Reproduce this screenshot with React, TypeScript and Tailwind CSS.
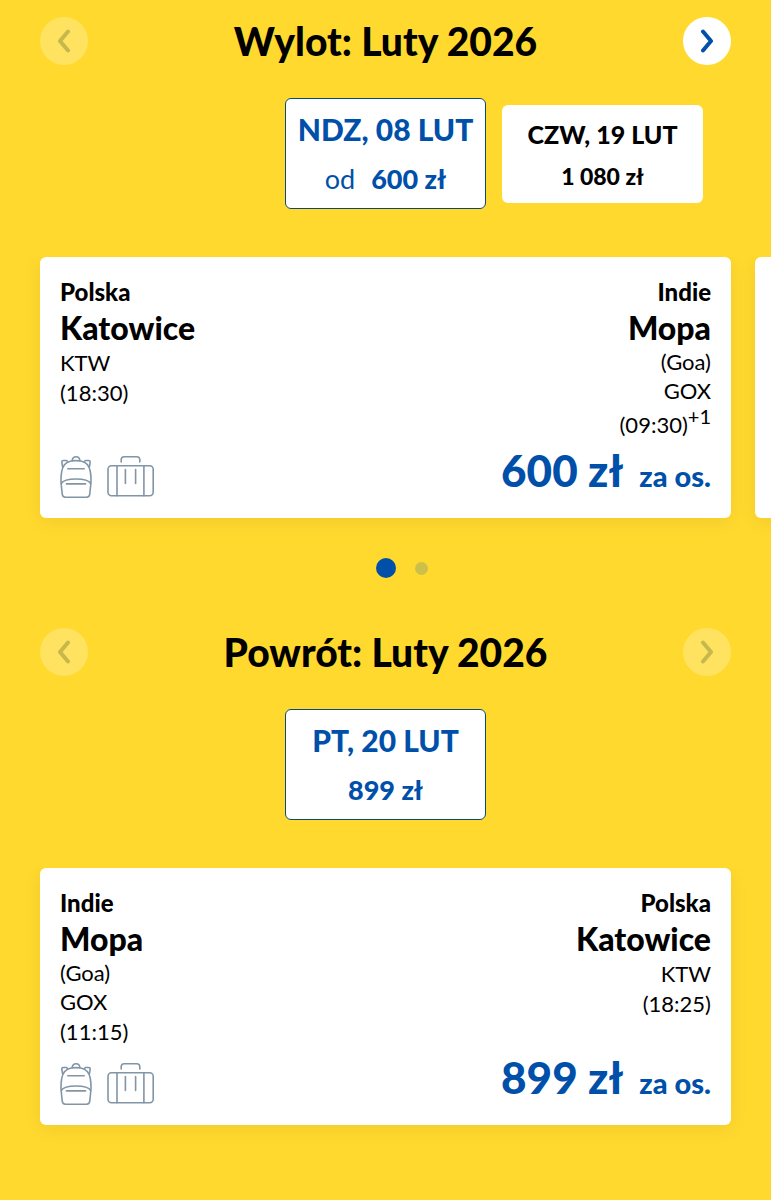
import React from 'react'
import clsx from 'clsx'

type Airport = {
  country: string
  city: string
  region?: string
  code: string
  time: string
  dayShift?: string
}

type DateOption = {
  label: string
  price: string
  prefix?: string
  selected?: boolean
}

type Flight = {
  from: Airport
  to: Airport
  price: string
}

const outboundDates: DateOption[] = [
  { label: 'NDZ, 08 LUT', price: '600 zł', prefix: 'od', selected: true },
  { label: 'CZW, 19 LUT', price: '1 080 zł' },
]

const returnDates: DateOption[] = [{ label: 'PT, 20 LUT', price: '899 zł', selected: true }]

const outboundFlight: Flight = {
  from: { country: 'Polska', city: 'Katowice', code: 'KTW', time: '(18:30)' },
  to: { country: 'Indie', city: 'Mopa', region: '(Goa)', code: 'GOX', time: '(09:30)', dayShift: '+1' },
  price: '600 zł',
}

const returnFlight: Flight = {
  from: { country: 'Indie', city: 'Mopa', region: '(Goa)', code: 'GOX', time: '(11:15)' },
  to: { country: 'Polska', city: 'Katowice', code: 'KTW', time: '(18:25)' },
  price: '899 zł',
}

const ArrowButton: React.FC<{ direction: 'left' | 'right'; disabled?: boolean }> = ({ direction, disabled }) => {
  return (
    <button
      type="button"
      disabled={disabled}
      aria-label={direction === 'left' ? 'Poprzedni miesiąc' : 'Następny miesiąc'}
      className={clsx(
        'flex size-12 shrink-0 items-center justify-center rounded-full',
        disabled ? 'bg-[#ffe360] text-[#c6b84b]' : 'bg-white text-[#0050aa]'
      )}
    >
      <svg width="14" height="24" viewBox="0 0 14 24" fill="none" stroke="currentColor" strokeWidth="4" strokeLinecap="round" strokeLinejoin="round">
        <path d={direction === 'left' ? 'M11 2.5 3 12l8 9.5' : 'M3 2.5 11 12l-8 9.5'} />
      </svg>
    </button>
  )
}

const MonthHeader: React.FC<{ title: string; nextDisabled?: boolean }> = ({ title, nextDisabled }) => {
  return (
    <header className="flex items-center justify-between px-10">
      <ArrowButton direction="left" disabled />
      <h2 className="text-center text-[39px] leading-[48px] font-black text-black">{title}</h2>
      <ArrowButton direction="right" disabled={nextDisabled} />
    </header>
  )
}

const DateButton: React.FC<{ option: DateOption }> = ({ option }) => {
  if (option.selected) {
    return (
      <button
        type="button"
        aria-pressed="true"
        className="col-start-2 flex flex-col items-center gap-3 rounded-md border border-[#0b4a74] bg-white pt-2.5 pb-[11px] font-black whitespace-nowrap text-[#0050aa]"
      >
        <span className="text-[30px] leading-10">{option.label}</span>
        <span className="flex gap-4 text-[27px] leading-9">
          {option.prefix && <span className="font-normal">{option.prefix}</span>}
          <span>{option.price}</span>
        </span>
      </button>
    )
  }
  return (
    <button
      type="button"
      aria-pressed="false"
      className="flex flex-col items-center gap-2 rounded-md bg-white py-[11px] font-black whitespace-nowrap text-black"
    >
      <span className="text-[25px] leading-9">{option.label}</span>
      <span className="text-[23px] leading-8">{option.price}</span>
    </button>
  )
}

// The selected date always sits in the middle column
const DatePicker: React.FC<{ options: DateOption[] }> = ({ options }) => {
  return (
    <div className="mt-[33px] grid grid-cols-[201px_201px_201px] items-center justify-center gap-4">
      {options.map((option) => (
        <DateButton key={option.label} option={option} />
      ))}
    </div>
  )
}

const AirportInfo: React.FC<{ airport: Airport; alignRight?: boolean }> = ({ airport, alignRight }) => {
  return (
    <div className={clsx('flex flex-col text-[22px] leading-[30px] text-black', alignRight && 'items-end')}>
      <span className="text-[24px] font-black">{airport.country}</span>
      <span className="text-[32px] leading-[41px] font-black">{airport.city}</span>
      {airport.region && <span className="leading-7">{airport.region}</span>}
      <span>{airport.code}</span>
      {airport.dayShift ? (
        <span className="flex items-start">
          <span className="pt-1">{airport.time}</span>
          <span className="text-xl leading-5">{airport.dayShift}</span>
        </span>
      ) : (
        <span>{airport.time}</span>
      )}
    </div>
  )
}

const BackpackIcon: React.FC = () => {
  return (
    <svg width="32" height="42" viewBox="0 0 32 42" fill="none" stroke="#8195a7" strokeWidth="1.6" strokeLinecap="round" strokeLinejoin="round">
      <path d="M11 5C5.5 6.2 2.6 9.6 1.7 15.5.8 21 .8 25 1.3 29l.9 9c.2 2 1.2 3.2 3.2 3.2h21.2c2 0 3-1.2 3.2-3.2l.9-9c.5-4 .5-8-.4-13.5C29.4 9.6 26.5 6.2 21 5c-3.3-.5-6.7-.5-10 0Z" />
      <path d="M12.2 4.7C12.2 2.3 13.8.8 16 .8s3.8 1.5 3.8 3.9" />
      <path d="M2.6 11 1.9 6.3c-.2-1.2.3-1.8 1.4-1.8h3.5l.9 1.7M29.4 11l.7-4.7c.2-1.2-.3-1.8-1.4-1.8h-3.5l-.9 1.7" />
      <path d="M1.3 27.5C3 24.5 7.5 23 16 23s13 1.5 14.7 4.5" />
      <path d="M7.8 12.7h16.4M6.5 27.9h19" />
    </svg>
  )
}

const SuitcaseIcon: React.FC = () => {
  return (
    <svg width="47" height="42" viewBox="0 0 47 42" fill="none" stroke="#8195a7" strokeWidth="1.6" strokeLinecap="round" strokeLinejoin="round">
      <rect x="1" y="9.8" width="45.2" height="30" rx="3.5" />
      <path d="M14.2 6V3.8c0-2 1-3 3-3h12.6c2 0 3 1 3 3V6" />
      <path d="M10 9.8v30M36.9 9.8v30M18.4 13.5v14M28.6 13.5v14" />
    </svg>
  )
}

const cardClass = 'rounded-md bg-white shadow-[0_4px_20px_rgba(0,0,0,0.06)]'

const FlightCard: React.FC<{ flight: Flight }> = ({ flight }) => {
  return (
    <article className={clsx(cardClass, 'p-5')}>
      <div className="flex justify-between">
        <AirportInfo airport={flight.from} />
        <AirportInfo airport={flight.to} alignRight />
      </div>
      <div className="mt-4 flex justify-between">
        <div className="flex gap-[15px]">
          <BackpackIcon />
          <SuitcaseIcon />
        </div>
        <p className="flex items-baseline gap-4 self-start leading-7 font-black text-[#0050aa]">
          <span className="text-[44px]">{flight.price}</span>
          <span className="text-[29px]">za os.</span>
        </p>
      </div>
    </article>
  )
}

const App: React.FC = () => {
  return (
    <main className="min-h-screen overflow-hidden bg-[#ffd92e] pt-[17px] font-['Lato','Noto_Sans',sans-serif]">
      <section>
        <MonthHeader title="Wylot: Luty 2026" />
        <DatePicker options={outboundDates} />
        <ul className="mt-12 flex gap-6 overflow-hidden px-10 pb-6">
          <li className="w-full shrink-0">
            <FlightCard flight={outboundFlight} />
          </li>
          <li className={clsx(cardClass, 'w-full shrink-0')} aria-hidden="true" />
        </ul>
        <div className="mt-4 grid grid-cols-[1fr_auto_1fr] items-center gap-[19px]">
          <button type="button" aria-label="Lot 1" className="col-start-2 size-5 rounded-full bg-[#0050aa]" />
          <button type="button" aria-label="Lot 2" className="size-[13px] rounded-full bg-[#ccc04b]" />
        </div>
      </section>
      <section className="mt-[50px]">
        <MonthHeader title="Powrót: Luty 2026" nextDisabled />
        <DatePicker options={returnDates} />
        <div className="mt-12 overflow-hidden px-10 pb-[75px]">
          <FlightCard flight={returnFlight} />
        </div>
      </section>
    </main>
  )
}

export default App
